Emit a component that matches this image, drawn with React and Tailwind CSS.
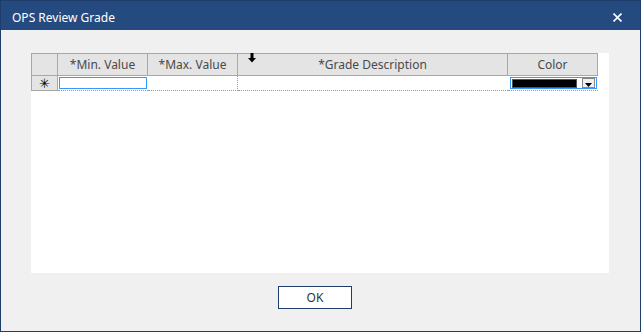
import React from "react";

const cols = [
  { label: "*Min. Value", w: "w-[90px]" },
  { label: "*Max. Value", w: "w-[90px]" },
  { label: "*Grade Description", w: "w-[270px]" },
  { label: "Color", w: "w-[90px]" },
];

function CloseIcon() {
  return (
    <svg width="9" height="9" viewBox="0 0 9 9" className="block mt-[3px]">
      <path d="M0.5 0.5 L8.5 8.5 M8.5 0.5 L0.5 8.5" stroke="#fff" strokeWidth="1.6" />
    </svg>
  );
}

function CursorArrow() {
  // the resize cursor that sits over the header
  return (
    <svg width="8" height="10" viewBox="0 0 8 10" className="absolute left-[217px] top-[0px]">
      <path d="M2.5 0 H5.5 V5 H8 L4 9.5 L0 5 H2.5 Z" fill="#000" />
    </svg>
  );
}

export default function App() {
  return (
    <div
      className="w-[641px] h-[332px] flex flex-col border border-[#1f3d6b] bg-[#f0f0f0] text-[12px]"
      style={{ fontFamily: '"Noto Sans", "Open Sans", sans-serif' }}
    >
      <div className="h-[29px] shrink-0 bg-[#254a80] flex items-center justify-between pl-[11px] pr-[18px] text-white">
        <span className="leading-none mt-[4px]">OPS Review Grade</span>
        <CloseIcon />
      </div>

      <div className="flex-1 flex flex-col">
        <div className="mt-[23px] ml-[30px] w-[578px] h-[220px] bg-white relative">
          <CursorArrow />
          {/* header */}
          <div className="flex h-[23px] text-[#4a4a4a]">
            <div className="w-[27px] border-t border-l border-r border-b border-[#a8a8a8] bg-[#e4e4e4]" />
            {cols.map((c) => (
              <div
                key={c.label}
                className={`${c.w} border-t border-r border-b border-[#a8a8a8] bg-[#e4e4e4] flex items-center justify-center leading-none pt-[1px]`}
              >
                {c.label}
              </div>
            ))}
          </div>
          {/* new row */}
          <div className="flex h-[15px]">
            <div className="w-[27px] border-l border-r border-b border-[#a8a8a8] bg-[#e4e4e4] flex items-center justify-center text-[13px] leading-none text-black">
              ✳
            </div>
            <div className="w-[90px] p-[1px] border-b border-dotted border-[#9a9a9a]">
              <div className="h-full border border-[#3399ff]" />
            </div>
            <div className="w-[90px] border-b border-r border-dotted border-[#9a9a9a]" />
            <div className="w-[270px] border-b border-dotted border-[#9a9a9a]" />
            <div className="w-[90px] border-b border-dotted border-[#9a9a9a] pl-[2px] pr-[1px] pt-[1px] pb-[1px]">
              <div className="h-full border border-[#3399ff] flex items-center pl-[1px] pr-[1px] gap-[5px]">
                <div className="w-[67px] h-[9px] bg-black border border-[#555]" />
                <div className="w-[13px] h-[10px] bg-[#f0f0f0] border border-[#888] flex items-end justify-center">
                  <svg width="7" height="4" viewBox="0 0 7 4" className="block">
                    <path d="M0 0 H7 L3.5 4 Z" fill="#000" />
                  </svg>
                </div>
              </div>
            </div>
          </div>
        </div>

        <div className="mt-[13px] pl-[277px]">
          <button
            type="button"
            className="w-[74px] h-[23px] bg-white border border-[#1f3d6b] text-[#333] text-[12px] leading-none flex items-center justify-center"
          >
            OK
          </button>
        </div>
      </div>
    </div>
  );
}
